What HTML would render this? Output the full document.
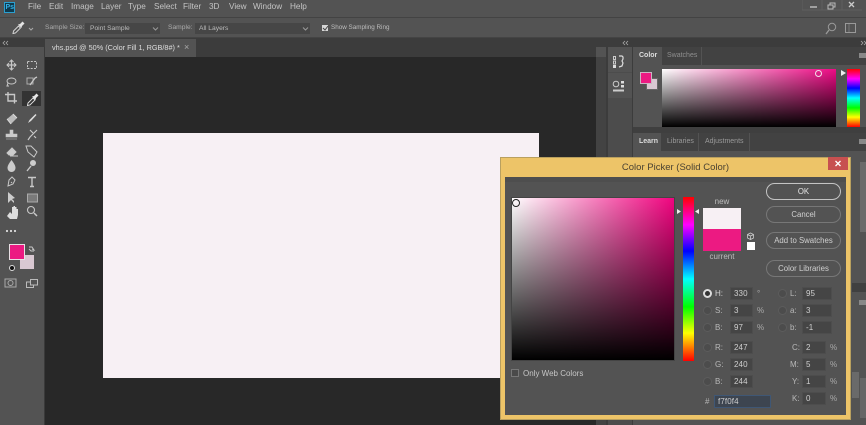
<!DOCTYPE html>
<html><head><meta charset="utf-8">
<style>
html,body{margin:0;padding:0}
body{width:866px;height:425px;overflow:hidden;background:#535353;position:relative;font-family:"Liberation Sans",sans-serif;font-size:8.5px;color:#c8c8c8}
div,span,svg{position:absolute;box-sizing:border-box}
.t{white-space:nowrap;line-height:12px}
.m{top:1px;font-size:8.2px;color:#c4c4c4}
.o{font-size:6.700px;color:#aaa;top:22px}
.tb{font-size:7px}
.i{background:#454545;border:1px solid #4d4d4d;color:#cfcfcf;font-size:8px;line-height:11px;padding-left:3px;letter-spacing:.1px}
.r{width:9px;height:9px;border-radius:50%;background:#4c4c4c;border:1px solid #5c5c5c}
.b{left:766px;width:75px;border:1px solid #777;border-radius:9px;color:#d0d0d0;text-align:center;font-size:7.800px}
.l{color:#b8b8b8;font-size:8px;margin-top:1px}
.p{color:#aaa;font-size:8px;margin-top:1px}
</style></head><body>
<!-- menu bar -->
<div style="left:0;top:0;width:866px;height:18px;background:#535353;border-bottom:1px solid #434343"></div>
<div style="left:4px;top:2px;width:11px;height:11px;background:#0f3a4e;border:1px solid #2a9fd0"></div>
<div class="t" style="left:5.500px;top:2px;font-size:7px;color:#35b0e6;font-weight:bold">Ps</div>
<div class="t m" style="left:28px">File</div><div class="t m" style="left:49px">Edit</div><div class="t m" style="left:71px">Image</div><div class="t m" style="left:101px">Layer</div><div class="t m" style="left:128px">Type</div><div class="t m" style="left:154px">Select</div><div class="t m" style="left:183px">Filter</div><div class="t m" style="left:209px">3D</div><div class="t m" style="left:229px">View</div><div class="t m" style="left:253px">Window</div><div class="t m" style="left:290px">Help</div>
<svg style="left:802px;top:0" width="64" height="12"><path d="M0 0V10H60" stroke="#5f5f5f" fill="none"/><path d="M20 0V10M40 0V10" stroke="#5f5f5f"/><path d="M8 7H15" stroke="#bbb" stroke-width="1.500"/><path d="M26 5h5v4h-5zM28 5V3h5v4h-2" stroke="#bbb" fill="none"/><path d="M47 2l5 5M52 2l-5 5" stroke="#ccc" stroke-width="1.300"/></svg>
<!-- options bar -->
<div style="left:0;top:18px;width:866px;height:20px;background:#535353;border-bottom:1px solid #444"></div>
<svg style="left:10px;top:20px" width="24" height="16"><path d="M3 13.500l.5-2.500 5-5 2 2-5 5z" fill="none" stroke="#ddd" stroke-width=".9"/><path d="M8 4.500l2-.5 2.500-2.500 2 2-2.500 2.500-.5 2z" fill="#e4e4e4"/><path d="M19 8l2 2 2-2" stroke="#aaa" fill="none"/></svg>
<div class="t o" style="left:45px">Sample Size:</div>
<div style="left:85px;top:23px;width:75px;height:11px;background:#464646"></div>
<div class="t o" style="left:90px;top:23px;color:#bbb">Point Sample</div>
<svg style="left:152px;top:26px" width="7" height="6"><path d="M1 1.500l2.500 2.500 2.500-2.500" stroke="#999" fill="none"/></svg>
<div class="t o" style="left:168px">Sample:</div>
<div style="left:195px;top:23px;width:115px;height:11px;background:#464646"></div>
<div class="t o" style="left:199px;top:23px;color:#bbb">All Layers</div>
<svg style="left:302px;top:26px" width="7" height="6"><path d="M1 1.500l2.500 2.500 2.500-2.500" stroke="#999" fill="none"/></svg>
<div style="left:322px;top:25px;width:6px;height:6px;background:#d5d5d5"></div>
<svg style="left:322px;top:25px" width="7" height="7"><path d="M1 3l2 2 3-4" stroke="#444" fill="none"/></svg>
<div class="t o" style="left:331px;color:#bdbdbd;font-size:6.300px">Show Sampling Ring</div>
<svg style="left:825px;top:22px" width="36" height="13"><circle cx="7" cy="5" r="3.700" stroke="#999" fill="none"/><path d="M4 8L1 12" stroke="#999" stroke-width="1.300"/><rect x="20.500" y="1.500" width="10" height="9" stroke="#999" fill="none"/><path d="M24 2V10" stroke="#777"/></svg>
<!-- tools strip + doc -->
<div style="left:0;top:38px;width:866px;height:9px;background:#3c3c3c"></div>
<div style="left:44px;top:47px;width:552px;height:10px;background:#3c3c3c"></div>
<div style="left:45px;top:39px;width:151px;height:18px;background:#535353"></div>
<div class="t" style="left:52px;top:42px;font-size:7.300px;color:#ddd">vhs.psd @ 50% (Color Fill 1, RGB/8#) *</div>
<div class="t" style="left:184px;top:41px;font-size:9px;color:#aaa">×</div>
<div style="left:0;top:47px;width:45px;height:378px;background:#535353;border-right:1px solid #3a3a3a"></div>
<div style="left:45px;top:57px;width:551px;height:368px;background:#282828"></div>
<div style="left:596px;top:57px;width:10px;height:368px;background:#434343"></div>
<div style="left:606px;top:38px;width:27px;height:387px;background:#3c3c3c"></div>
<div style="left:608px;top:47px;width:24px;height:378px;background:#4c4c4c"></div>
<div style="left:608px;top:47px;width:24px;height:25px;background:#535353"></div>
<div style="left:608px;top:73px;width:24px;height:25px;background:#535353"></div>
<svg style="left:0;top:40px" width="866" height="6" fill="none" stroke="#aaa" stroke-width=".8"><path d="M5 1L3 3l2 2M8 1L6 3l2 2M625 1l-2 2 2 2M628 1l-2 2 2 2M861 1l2 2-2 2M864 1l2 2-2 2"/></svg>
<svg style="left:612px;top:54px" width="16" height="38"><path d="M1.500 2.500h2v3h-2zM1.500 7h2v3h-2z" stroke="#ccc" fill="none"/><rect x="1" y="11" width="3" height="3" fill="#ddd"/><path d="M7 2h3l1 1v2l-1 2 1 2-1 3-3 1" stroke="#ddd" stroke-width="1.200" fill="none"/><circle cx="4" cy="30" r="2.800" fill="none" stroke="#ccc"/><rect x="9" y="27" width="3" height="2.500" fill="#ddd"/><rect x="9" y="31" width="3" height="2.500" fill="#ddd"/><rect x="1" y="35.500" width="11" height="2" fill="#ccc"/></svg>
<!-- document canvas -->
<div style="left:103px;top:133px;width:436px;height:245px;background:#f7f0f4"></div>
<!-- tools -->
<div style="left:22px;top:91px;width:19px;height:15px;background:#333"></div>
<svg style="left:0;top:50px" width="45" height="375" fill="none" stroke="#c8c8c8">
<path d="M7 15H16M11.500 10.500V20" stroke-width="1.300"/><path d="M9.500 12l2-2 2 2M9.500 18l2 2 2-2M9 13l-2 2 2 2M14 13l2 2-2 2" stroke-width="1"/>
<rect x="27.500" y="11.500" width="9" height="7" stroke-dasharray="2 1.300"/>
<ellipse cx="11.500" cy="31" rx="4.500" ry="3"/><path d="M8 33l-1 3 2 0"/>
<rect x="27" y="28" width="6" height="6" stroke="#aaa"/><path d="M30 35l5-7 2-1" stroke-width="1.300"/>
<path d="M5 44.500h9.500v9M8 42v9h9" stroke-width="1.400"/>
<path d="M27.500 55.500l.5-2.500 5-5 2 2-5 5z" stroke-width=".9" stroke="#e4e4e4"/><path d="M32 46.500l2-.5 2.500-2.500 2 2-2.500 2.500-.5 2z" fill="#e8e8e8" stroke="none"/>
<path d="M7 69l6-5 4 4-6 6z" fill="#bbb" stroke="none"/><path d="M7 69l4 5M13 64l4 4" stroke="#ddd"/>
<path d="M28 73l1.500-3 6-6 1 1-5.500 6z" fill="#ddd" stroke="none"/>
<path d="M10 80h3v4h4v3H6v-3h4zM6 89h11" fill="#ccc" stroke-width=".6"/>
<path d="M28 90l2-3 7-7M30 80l3 3M34 86l2 2" stroke-width="1.200"/>
<path d="M7 103l5-5 4 4-3 3H9zM10 106h8" stroke-width="1" fill="#ccc"/>
<path d="M26 96l5 0 6 6-3 5-6-5z" stroke-width="1"/>
<path d="M11.500 110c-3 4-4 6-4 8a4 4 0 0 0 8 0c0-2-1-4-4-8z" fill="#ccc" stroke="none"/>
<circle cx="33" cy="113" r="3" fill="#ccc" stroke="none"/><path d="M31 116l-4 5" stroke-width="1.400"/>
<path d="M8 136l1-6 3-3 3 3-2 4-5 2zM11 132l1 1" stroke-width="1"/>
<path d="M28 127.500h8M32 127.500v9M30 136.500h4" stroke-width="1.400"/>
<path d="M8 142v11l3-3 3 3 0-2-2-2 3-1z" fill="#ccc" stroke="none"/>
<rect x="27.500" y="144" width="10" height="8" fill="#7a7a7a" stroke="#aaa"/>
<path d="M7 166l3 3h7l1-4v-6h-1.500v3-5h-1.500v4-5h-1.500v5-4h-1.500v7l-2-2z" fill="#ddd" stroke="none"/>
<circle cx="31" cy="160" r="3.500" stroke-width="1.100"/><path d="M34 163l3 3" stroke-width="1.500"/>
<circle cx="7" cy="181" r="1.100" fill="#ddd" stroke="none"/><circle cx="11" cy="181" r="1.100" fill="#ddd" stroke="none"/><circle cx="15" cy="181" r="1.100" fill="#ddd" stroke="none"/>
<path d="M29 197h3l2 3-2-1M34 201h-3l-2-2" stroke-width=".9"/>
<rect x="5" y="229" width="11" height="8" stroke="#aaa"/><circle cx="10.500" cy="233" r="2.500" stroke="#aaa"/>
<rect x="26.500" y="232" width="7" height="5.500" stroke="#bbb"/><rect x="30.500" y="229.500" width="7" height="5.500" stroke="#bbb" fill="#535353"/>
</svg>
<div style="left:19px;top:254px;width:16px;height:16px;background:#d9c8d2;border:1px solid #555"></div>
<div style="left:9px;top:244px;width:16px;height:16px;background:#ec1a82;border:1px solid #e8e0e4"></div>
<div style="left:9px;top:265px;width:6px;height:6px;border-radius:50%;background:#111;border:1px solid #ddd"></div>
<!-- right panels -->
<div style="left:633px;top:47px;width:233px;height:18px;background:#424242"></div>
<div style="left:633px;top:47px;width:29px;height:18px;background:#535353"></div>
<div style="left:662px;top:47px;width:40px;height:18px;border-right:1px solid #535353"></div>
<div class="t tb" style="left:639px;top:50px;color:#ddd;font-weight:bold">Color</div>
<div class="t tb" style="left:667px;top:50px;color:#8f8f8f">Swatches</div>
<div style="left:859px;top:53px;width:7px;height:5px;background:#888"></div>
<div style="left:646px;top:78px;width:12px;height:12px;background:#d9c8d2;border:1px solid #666"></div>
<div style="left:640px;top:72px;width:12px;height:12px;background:#ec1a82;border:1px solid #cbb6c3"></div>
<div style="left:662px;top:69px;width:174px;height:58px;background:linear-gradient(to bottom,rgba(0,0,0,0),#000),linear-gradient(to right,#fff,#ee0a85)"></div>
<div style="left:815px;top:70px;width:7px;height:7px;border-radius:50%;border:1px solid #f0e0e8"></div>
<svg style="left:841px;top:70px" width="5" height="6"><path d="M0 0l5 3-5 3z" fill="#eee"/></svg>
<div style="left:847px;top:69px;width:13px;height:58px;background:linear-gradient(to bottom,#f00,#f0f 17%,#00f 33%,#0ff 50%,#0f0 67%,#ff0 83%,#f00)"></div>
<div style="left:633px;top:127px;width:233px;height:6px;background:#3f3f3f"></div>
<div style="left:633px;top:133px;width:233px;height:18px;background:#424242"></div>
<div style="left:633px;top:133px;width:28px;height:18px;background:#535353"></div>
<div style="left:698px;top:133px;width:1px;height:18px;background:#535353"></div>
<div style="left:749px;top:133px;width:1px;height:18px;background:#535353"></div>
<div class="t tb" style="left:639px;top:136px;color:#ddd;font-weight:bold">Learn</div>
<div class="t tb" style="left:667px;top:136px;color:#9a9a9a">Libraries</div>
<div class="t tb" style="left:705px;top:136px;color:#9a9a9a">Adjustments</div>
<div style="left:859px;top:139px;width:7px;height:5px;background:#888"></div>
<div style="left:860px;top:162px;width:6px;height:70px;background:#6a6a6a"></div>
<div style="left:852px;top:283px;width:14px;height:9px;background:#404040"></div>
<div style="left:859px;top:300px;width:7px;height:5px;background:#888"></div>
<div style="left:852px;top:372px;width:7px;height:26px;background:#6a6a6a"></div>
<div style="left:860px;top:378px;width:6px;height:40px;background:#666"></div>
<!-- dialog -->
<div style="left:500px;top:157px;width:351px;height:263px;background:#edc468;border:1px solid #b9a05f"></div>
<div style="left:505px;top:177px;width:341px;height:238px;background:#535353;box-shadow:inset 0 5px 0 #4e4e4e"></div>
<div class="t" style="left:500px;top:162px;width:351px;text-align:center;font-size:9.500px;color:#4a4232">Color Picker (Solid Color)</div>
<div style="left:828px;top:157px;width:20px;height:13px;background:#c75050"></div>
<svg style="left:834px;top:160px" width="8" height="7"><path d="M1.500 1l5 5M6.500 1l-5 5" stroke="#fff" stroke-width="1.300"/></svg>
<div style="left:511px;top:197px;width:164px;height:164px;background:linear-gradient(to bottom,rgba(0,0,0,0),#000),linear-gradient(to right,#fff,#f0047f);border:1px solid #444"></div>
<div style="left:512px;top:199px;width:8px;height:8px;border-radius:50%;border:1px solid #222;box-shadow:inset 0 0 0 .5px #fff"></div>
<svg style="left:677px;top:209px" width="5" height="5"><path d="M0 0l4 2.500-4 2.500z" fill="#eee"/></svg>
<svg style="left:695px;top:209px" width="5" height="5"><path d="M4 0L0 2.500 4 5z" fill="#eee"/></svg>
<div style="left:683px;top:197px;width:11px;height:164px;background:linear-gradient(to bottom,#f00,#f0f 17%,#00f 33%,#0ff 50%,#0f0 67%,#ff0 83%,#f00)"></div>
<div class="t" style="left:702px;top:196px;width:40px;text-align:center;font-size:8px;color:#bdbdbd">new</div>
<div style="left:703px;top:208px;width:38px;height:21px;background:#f7f0f4"></div>
<div style="left:703px;top:229px;width:38px;height:22px;background:#ec1a82"></div>
<div class="t" style="left:702px;top:251px;width:40px;text-align:center;font-size:8px;color:#bdbdbd">current</div>
<svg style="left:746px;top:232px" width="9" height="9"><path d="M4.500 1l3 1.500v3.500l-3 1.500-3-1.500V2.500zM1.500 2.500l3 1.500 3-1.500M4.500 4v4" stroke="#ccc" fill="none" stroke-width=".8"/></svg>
<div style="left:747px;top:242px;width:8px;height:8px;background:#fff"></div>
<div class="b" style="top:183px;height:17px;line-height:15px;border-color:#c4c4c4;border-width:1.300px;color:#e6e6e6">OK</div>
<div class="b" style="top:206px;height:17px;line-height:15px">Cancel</div>
<div class="b" style="top:232px;height:17px;line-height:15px">Add to Swatches</div>
<div class="b" style="top:260px;height:17px;line-height:15px">Color Libraries</div>
<!-- radios -->
<div class="r" style="left:703px;top:289px;background:#333;border:2.200px solid #ddd"></div>
<div class="r" style="left:703px;top:306px"></div><div class="r" style="left:703px;top:323px"></div>
<div class="r" style="left:703px;top:343px"></div><div class="r" style="left:703px;top:360px"></div><div class="r" style="left:703px;top:377px"></div>
<div class="r" style="left:778px;top:289px"></div><div class="r" style="left:778px;top:306px"></div><div class="r" style="left:778px;top:323px"></div>
<div class="t l" style="left:715px;top:287px;color:#d4d4d4">H:</div><div class="t l" style="left:715px;top:304px">S:</div><div class="t l" style="left:715px;top:321px">B:</div>
<div class="t l" style="left:715px;top:341px">R:</div><div class="t l" style="left:715px;top:358px">G:</div><div class="t l" style="left:715px;top:375px">B:</div>
<div class="i" style="left:730px;top:287px;width:23px;height:13px">330</div>
<div class="i" style="left:730px;top:304px;width:23px;height:13px">3</div>
<div class="i" style="left:730px;top:321px;width:23px;height:13px">97</div>
<div class="i" style="left:730px;top:341px;width:23px;height:13px">247</div>
<div class="i" style="left:730px;top:358px;width:23px;height:13px">240</div>
<div class="i" style="left:730px;top:375px;width:23px;height:13px">244</div>
<div class="t p" style="left:757px;top:287px">°</div><div class="t p" style="left:757px;top:304px">%</div><div class="t p" style="left:757px;top:321px">%</div>
<div class="t l" style="left:790px;top:287px">L:</div><div class="t l" style="left:790px;top:304px">a:</div><div class="t l" style="left:790px;top:321px">b:</div>
<div class="i" style="left:802px;top:287px;width:30px;height:13px">95</div>
<div class="i" style="left:802px;top:304px;width:30px;height:13px">3</div>
<div class="i" style="left:802px;top:321px;width:30px;height:13px">-1</div>
<div class="t l" style="left:792px;top:341px">C:</div><div class="t l" style="left:790px;top:358px">M:</div><div class="t l" style="left:792px;top:375px">Y:</div><div class="t l" style="left:792px;top:392px">K:</div>
<div class="i" style="left:802px;top:341px;width:24px;height:13px">2</div>
<div class="i" style="left:802px;top:358px;width:24px;height:13px">5</div>
<div class="i" style="left:802px;top:375px;width:24px;height:13px">1</div>
<div class="i" style="left:802px;top:392px;width:24px;height:13px">0</div>
<div class="t p" style="left:830px;top:341px">%</div><div class="t p" style="left:830px;top:358px">%</div><div class="t p" style="left:830px;top:375px">%</div><div class="t p" style="left:830px;top:392px">%</div>
<div class="t l" style="left:705px;top:395px">#</div>
<div class="i" style="left:714px;top:395px;width:57px;height:13px;background:#3d4550;border-color:#3f5775;padding-left:3px">f7f0f4</div>
<div style="left:511px;top:369px;width:8px;height:8px;border:1px solid #777;background:#4a4a4a"></div>
<div class="t" style="left:523px;top:368px;font-size:8px;color:#c6c6c6">Only Web Colors</div>
</body></html>
